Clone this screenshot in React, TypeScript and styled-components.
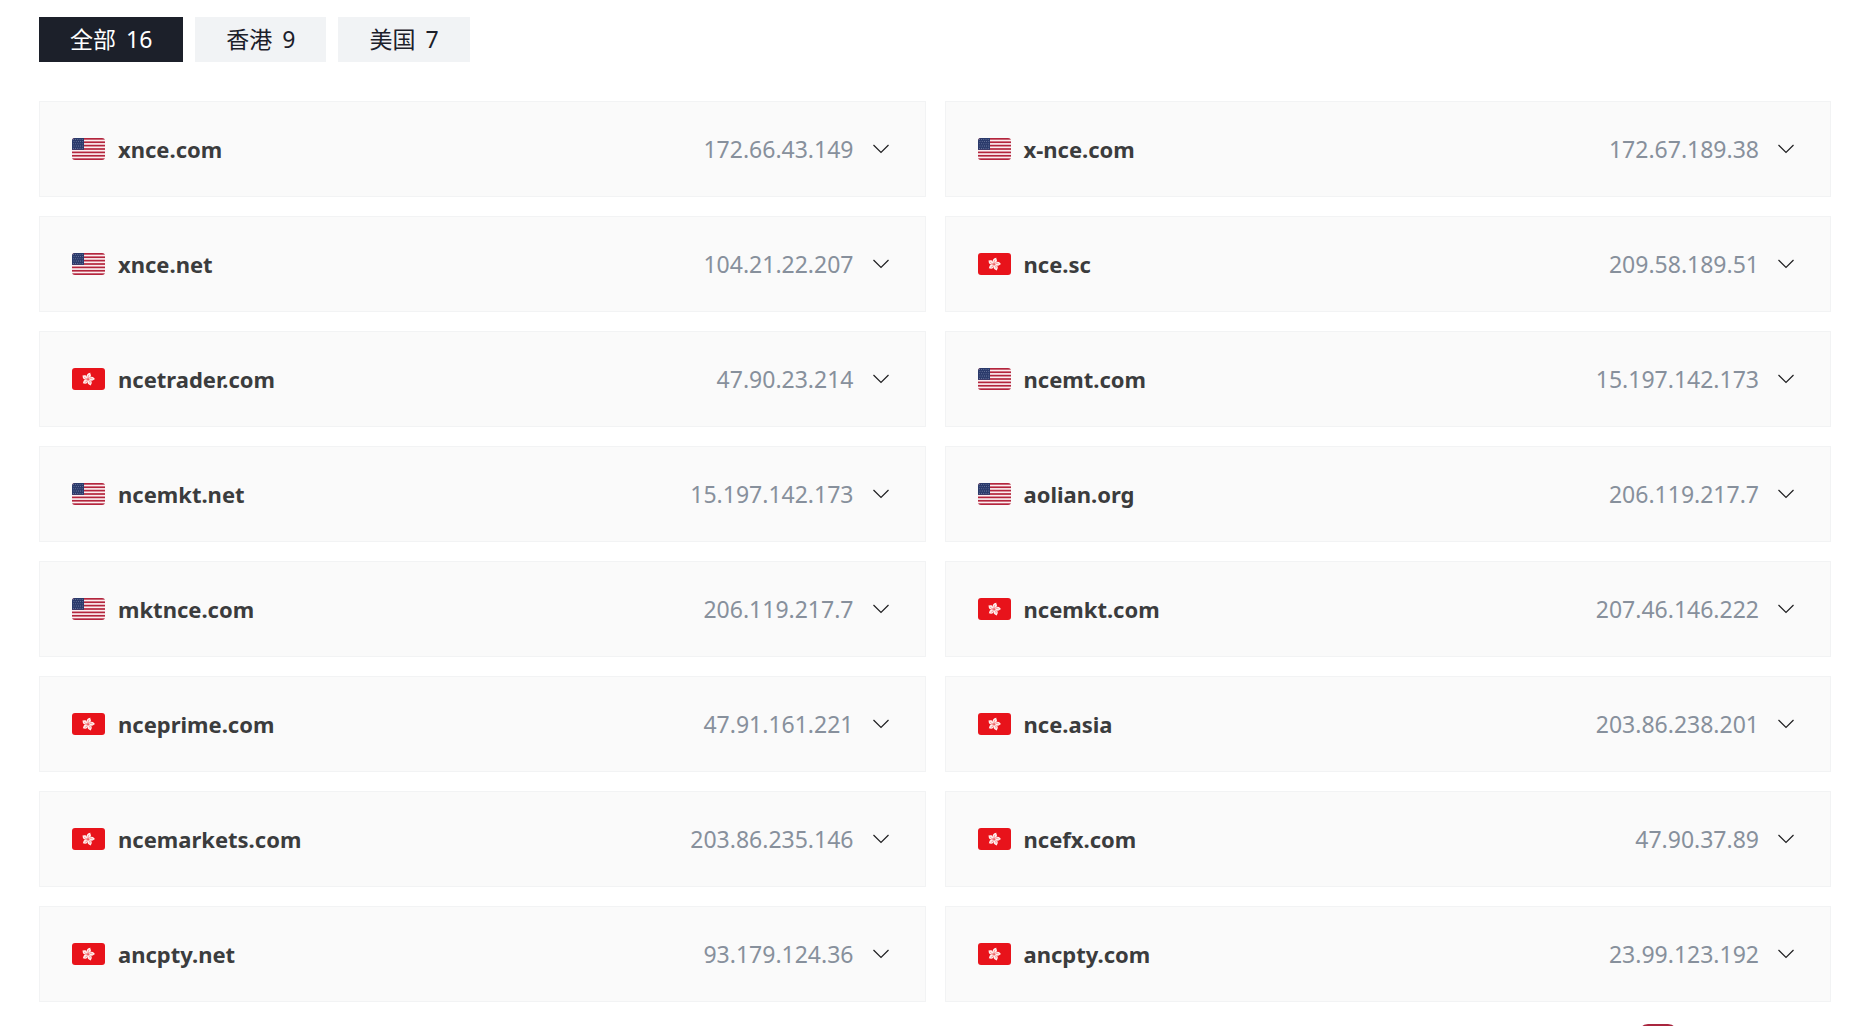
import React, { useState } from "react";
import styled, { createGlobalStyle } from "styled-components";

const GlobalStyle = createGlobalStyle`
  * { box-sizing: border-box; }
  body {
    margin: 0;
    background: #ffffff;
    font-family: "Noto Sans", "Noto Sans CJK SC", sans-serif;
  }
`;

const Page = styled.main`
  padding: 17px 41px 24px 39px;
`;

const Tabs = styled.nav`
  display: flex;
  gap: 12px;
  margin-bottom: 39px;
`;

const Tab = styled.button<{ $active: boolean }>`
  display: flex;
  align-items: center;
  gap: 10px;
  height: 45px;
  padding: 0 31px 2px;
  border: 0;
  background: ${(p) => (p.$active ? "#1c202a" : "#f1f3f5")};
  color: ${(p) => (p.$active ? "#ffffff" : "#1c202a")};
  font: inherit;
  font-size: 23px;
  line-height: 32px;
  cursor: pointer;
`;

const Grid = styled.ul`
  display: grid;
  grid-template-columns: repeat(2, minmax(0, 1fr));
  gap: 19px;
  margin: 0;
  padding: 0;
  list-style: none;
`;

const Card = styled.button`
  display: flex;
  align-items: center;
  width: 100%;
  height: 96px;
  padding: 0 36px 0 32px;
  border: 1px solid #f2f3f4;
  background: #fafafa;
  font: inherit;
  line-height: 32px;
  text-align: left;
  cursor: pointer;
`;

const FlagArt = styled.svg`
  flex: none;
  width: 33px;
  height: 22px;
  margin-right: 13px;
  border-radius: 3px;
`;

const Domain = styled.span`
  flex: 1;
  color: #3b3c3d;
  font-size: 22px;
  font-weight: 700;
`;

const Address = styled.span`
  margin-right: 19px;
  color: #87909c;
  font-size: 23px;
`;

const Chevron = styled.svg`
  flex: none;
  width: 16px;
  height: 10px;
`;

const FloatingBadge = styled.div`
  position: fixed;
  right: 194px;
  bottom: -30px;
  width: 40px;
  height: 32px;
  border-radius: 10px;
  background: #a9263f;
`;

type Region = "us" | "hk";

const sites: [Region, string, string][] = [
  ["us", "xnce.com", "172.66.43.149"],
  ["us", "x-nce.com", "172.67.189.38"],
  ["us", "xnce.net", "104.21.22.207"],
  ["hk", "nce.sc", "209.58.189.51"],
  ["hk", "ncetrader.com", "47.90.23.214"],
  ["us", "ncemt.com", "15.197.142.173"],
  ["us", "ncemkt.net", "15.197.142.173"],
  ["us", "aolian.org", "206.119.217.7"],
  ["us", "mktnce.com", "206.119.217.7"],
  ["hk", "ncemkt.com", "207.46.146.222"],
  ["hk", "nceprime.com", "47.91.161.221"],
  ["hk", "nce.asia", "203.86.238.201"],
  ["hk", "ncemarkets.com", "203.86.235.146"],
  ["hk", "ncefx.com", "47.90.37.89"],
  ["hk", "ancpty.net", "93.179.124.36"],
  ["hk", "ancpty.com", "23.99.123.192"],
];

const filters: { key: "all" | Region; label: string; count: number }[] = [
  { key: "all", label: "全部", count: 16 },
  { key: "hk", label: "香港", count: 9 },
  { key: "us", label: "美国", count: 7 },
];

const stripes = [0, 2, 4, 6, 8, 10, 12];
const starRows = [0, 1, 2, 3, 4];
const starCols = [0, 1, 2, 3, 4];
const petals = [0, 72, 144, 216, 288];

function Flag({ region }: { region: Region }) {
  if (region === "us") {
    return (
      <FlagArt viewBox="0 0 33 23" preserveAspectRatio="none" aria-hidden="true">
        <rect width="33" height="23" fill="#fbeef0" />
        {stripes.map((i) => (
          <rect key={i} y={(i * 23) / 13} width="33" height={23 / 13} fill="#b3253d" />
        ))}
        <rect width="12" height="12.4" fill="#2a3a6b" />
        {starRows.map((r) =>
          starCols.map((c) => (
            <circle
              key={`${r}-${c}`}
              cx={1.4 + c * 2.2 + (r % 2) * 0.6}
              cy={1.5 + r * 2.3}
              r="0.45"
              fill="#a9b2cc"
            />
          )),
        )}
      </FlagArt>
    );
  }
  return (
    <FlagArt viewBox="0 0 33 22" aria-hidden="true">
      <rect width="33" height="22" fill="#e8131b" />
      <g transform="translate(16.2 11.2)">
        {petals.map((a) => (
          <g key={a} transform={`rotate(${a + 12})`}>
            <path
              d="M0 -0.4C-3 -2.1 -2.9 -5.6 0.9 -6.8C0.2 -5.7 2.9 -4.7 1.7 -2.6C1.2 -1.8 0.4 -1.5 0 -0.4Z"
              fill="#fff0ee"
            />
            <path d="M0 -1.2C-0.9 -2.4 -0.7 -3.6 0.1 -4.5" fill="none" stroke="#e8131b" strokeWidth="0.35" />
          </g>
        ))}
      </g>
    </FlagArt>
  );
}

export default function App() {
  const [active, setActive] = useState<"all" | Region>("all");
  const visible = sites.filter(([region]) => active === "all" || region === active);

  return (
    <>
      <GlobalStyle />
      <Page>
        <Tabs>
          {filters.map((f) => (
            <Tab
              key={f.key}
              type="button"
              $active={active === f.key}
              aria-pressed={active === f.key}
              onClick={() => setActive(f.key)}
            >
              <span>{f.label}</span>
              <span>{f.count}</span>
            </Tab>
          ))}
        </Tabs>
        <Grid>
          {visible.map(([region, domain, address]) => (
            <li key={domain}>
              <Card type="button">
                <Flag region={region} />
                <Domain>{domain}</Domain>
                <Address>{address}</Address>
                <Chevron viewBox="0 0 16 10" aria-hidden="true">
                  <path d="M0.5 1L8 8.5L15.5 1" fill="none" stroke="#1e1e20" strokeWidth="1.2" />
                </Chevron>
              </Card>
            </li>
          ))}
        </Grid>
      </Page>
      <FloatingBadge />
    </>
  );
}
